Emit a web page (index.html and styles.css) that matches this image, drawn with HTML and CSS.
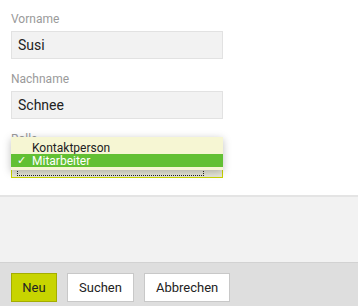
FILE: index.html
```html
<!DOCTYPE html>
<html lang="de">
<head>
  <meta charset="UTF-8">
  <title>Person</title>
  <link rel="stylesheet" href="styles.css">
</head>
<body>
  <div class="form">
    <div class="field">
      <label>Vorname</label>
      <div class="input">Susi</div>
    </div>
    <div class="field">
      <label>Nachname</label>
      <div class="input">Schnee</div>
    </div>
    <div class="field select-field">
      <label>Rolle</label>
      <div class="select"><span class="focus"></span></div>
      <ul class="popup">
        <li>Kontaktperson</li>
        <li class="selected"><span class="check">✓</span>Mitarbeiter</li>
      </ul>
    </div>
  </div>

  <div class="panel"></div>

  <div class="footer">
    <button class="btn btn-primary">Neu</button>
    <button class="btn">Suchen</button>
    <button class="btn">Abbrechen</button>
  </div>
</body>
</html>
```

FILE: styles.css
```css
body {
  margin: 0;
  font-family: Roboto, "Liberation Sans", sans-serif;
  background: white;
  color: #222;
}
.form {
  padding: 12px 11px 0;
  height: 183px;
}
.field {
  width: 212px;
  margin-bottom: 13px;
}
.field label {
  display: block;
  font-size: 12px;
  line-height: 15px;
  color: #9a9a9a;
  margin-bottom: 4px;
}
.input {
  box-sizing: border-box;
  height: 28px;
  line-height: 26px;
  padding-left: 6px;
  font-size: 14px;
  background: #f2f2f2;
  border: 1px solid #e2e2e2;
}
.select-field {
  position: relative;
}
.select {
  position: relative;
  box-sizing: border-box;
  height: 27px;
  background: #e6e6d8;
  border: 1px solid #c8d400;
}
.select .focus {
  position: absolute;
  left: 5px;
  right: 18px;
  bottom: 1px;
  height: 6px;
  border: 1px dotted #222;
  border-top: none;
}
.popup {
  position: absolute;
  left: 0;
  top: 5px;
  width: 212px;
  margin: 0;
  padding: 4px 0 3px;
  list-style: none;
  background: #f6f6d3;
  box-shadow: 0 2px 8px rgba(0,0,0,0.25);
}
.popup li {
  position: relative;
  height: 13px;
  line-height: 14px;
  padding-left: 21px;
  font-size: 12px;
  color: #222;
}
.popup li.selected {
  background: #62c033;
  color: white;
}
.check {
  position: absolute;
  left: 6px;
  font-size: 11px;
}
.panel {
  height: 65px;
  background: #f2f2f2;
  border-top: 2px solid #e4e4e4;
  border-bottom: 1px solid #d2d2d2;
}
.footer {
  display: flex;
  gap: 10px;
  height: 43px;
  box-sizing: border-box;
  padding: 10px 11px 0;
  background: #dedede;
}
.btn {
  height: 29px;
  padding: 0 11px;
  font-family: Roboto, "Liberation Sans", sans-serif;
  font-size: 13px;
  color: #222;
  background: white;
  border: 1px solid #c8c8c8;
}
.btn-primary {
  width: 46px;
  padding: 0;
  background: #c8d400;
  border-color: #a4ad00;
}
```
